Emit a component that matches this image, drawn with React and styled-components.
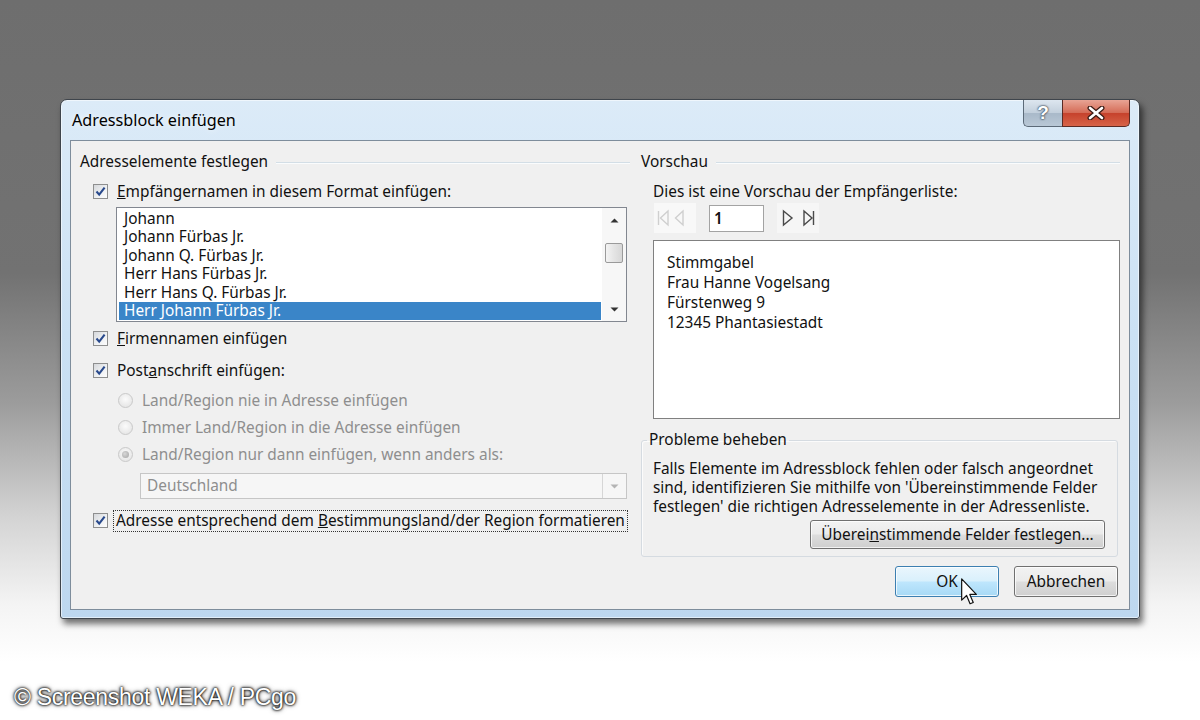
import React from "react";
import styled, { createGlobalStyle } from "styled-components";

const FS = "15.4px";

const GlobalStyle = createGlobalStyle`
  html, body {
    margin: 0;
    padding: 0;
  }
  body {
    width: 1200px;
    height: 720px;
    overflow: hidden;
    font-family: "Noto Sans", "Open Sans", sans-serif;
    color: #111;
  }
`;

const names = [
  "Johann",
  "Johann Fürbas Jr.",
  "Johann Q. Fürbas Jr.",
  "Herr Hans Fürbas Jr.",
  "Herr Hans Q. Fürbas Jr.",
  "Herr Johann Fürbas Jr.",
];

const address = ["Stimmgabel", "Frau Hanne Vogelsang", "Fürstenweg 9", "12345 Phantasiestadt"];

function CheckBox() {
  return (
    <StyledCheck>
      <svg width="13" height="13" viewBox="0 0 13 13">
        <path d="M2.5 6.5 L5.2 9.6 L10.6 2.6" fill="none" stroke="#28498c" strokeWidth="2.1" />
      </svg>
    </StyledCheck>
  );
}

function App() {
  return (
    <>
      <GlobalStyle />
      <Page>
        <Window>
          <TitleBar>
            <Title>Adressblock einfügen</Title>
            <Controls>
              <HelpButton>?</HelpButton>
              <CloseButton>
                <svg width="20" height="14" viewBox="0 0 20 14">
                  <path d="M4 2 L16 12 M16 2 L4 12" stroke="#3a1a14" strokeWidth="5" strokeLinecap="round" />
                  <path d="M4 2 L16 12 M16 2 L4 12" stroke="#fff" strokeWidth="2.6" strokeLinecap="round" />
                </svg>
              </CloseButton>
            </Controls>
          </TitleBar>

          <Client>
            <Column $width={550}>
              <GroupHeader>Adresselemente festlegen</GroupHeader>

              <CheckRow $mt={10} $indent={13}>
                <CheckBox />
                <Label>
                  <u>E</u>mpfängernamen in diesem Format einfügen:
                </Label>
              </CheckRow>

              <ListBox>
                <ListItems>
                  {names.map((n, i) => (
                    <ListItem key={n} $selected={i === names.length - 1}>
                      {n}
                    </ListItem>
                  ))}
                </ListItems>
                <ScrollBar>
                  <ScrollArrow>
                    <svg width="9" height="5" viewBox="0 0 9 5">
                      <path d="M0.5 4.5 L4.5 0.5 L8.5 4.5 Z" fill="#333" />
                    </svg>
                  </ScrollArrow>
                  <Thumb />
                  <ScrollSpacer />
                  <ScrollArrow>
                    <svg width="9" height="5" viewBox="0 0 9 5">
                      <path d="M0.5 0.5 L4.5 4.5 L8.5 0.5 Z" fill="#333" />
                    </svg>
                  </ScrollArrow>
                </ScrollBar>
              </ListBox>

              <CheckRow $mt={7} $indent={13}>
                <CheckBox />
                <Label>
                  <u>F</u>irmennamen einfügen
                </Label>
              </CheckRow>

              <CheckRow $mt={12} $indent={13}>
                <CheckBox />
                <Label>
                  Post<u>a</u>nschrift einfügen:
                </Label>
              </CheckRow>

              <CheckRow $mt={10} $indent={38}>
                <Radio />
                <Label $disabled>Land/Region nie in Adresse einfügen</Label>
              </CheckRow>
              <CheckRow $mt={7} $indent={38}>
                <Radio />
                <Label $disabled>Immer Land/Region in die Adresse einfügen</Label>
              </CheckRow>
              <CheckRow $mt={7} $indent={38}>
                <Radio $checked />
                <Label $disabled>Land/Region nur dann einfügen, wenn anders als:</Label>
              </CheckRow>

              <Combo>
                <ComboText>Deutschland</ComboText>
                <ComboButton>
                  <svg width="9" height="5" viewBox="0 0 9 5">
                    <path d="M0.5 0.5 L4.5 4.5 L8.5 0.5 Z" fill="#b4b4b4" />
                  </svg>
                </ComboButton>
              </Combo>

              <CheckRow $mt={12} $indent={13}>
                <CheckBox />
                <FocusLabel>
                  Adresse entsprechend dem <u>B</u>estimmungsland/der Region formatieren
                </FocusLabel>
              </CheckRow>
            </Column>

            <Column $width={479}>
              <GroupHeader>Vorschau</GroupHeader>
              <Caption>Dies ist eine Vorschau der Empfängerliste:</Caption>

              <NavRow>
                <NavGroup $disabled>
                  <svg width="42" height="30" viewBox="0 0 42 30">
                    <g fill="none" stroke="#cfcfcf" strokeWidth="1.4">
                      <path d="M4.5 8 V22" />
                      <path d="M14 8 L6.5 15 L14 22 Z" />
                      <path d="M29 8 L21.5 15 L29 22 Z" />
                    </g>
                  </svg>
                </NavGroup>
                <PageInput>1</PageInput>
                <NavGroup>
                  <svg width="42" height="30" viewBox="0 0 42 30">
                    <g fill="none" stroke="#4a4a4a" strokeWidth="1.4">
                      <path d="M6.5 8 L15 15 L6.5 22 Z" />
                      <path d="M27 8 L35 15 L27 22 Z" />
                      <path d="M36.5 8 V22" />
                    </g>
                  </svg>
                </NavGroup>
              </NavRow>

              <PreviewBox>
                {address.map((line) => (
                  <div key={line}>{line}</div>
                ))}
              </PreviewBox>

              <GroupBox>
                <Legend>Probleme beheben</Legend>
                <HelpText>
                  Falls Elemente im Adressblock fehlen oder falsch angeordnet
                  <br />
                  sind, identifizieren Sie mithilfe von 'Übereinstimmende Felder
                  <br />
                  festlegen' die richtigen Adresselemente in der Adressenliste.
                </HelpText>
                <GroupButtonRow>
                  <Button $width={295} $height={29}>
                    Überei<u>n</u>stimmende Felder festlegen...
                  </Button>
                </GroupButtonRow>
              </GroupBox>

              <ButtonRow>
                <Button $primary $width={104} $height={31}>
                  OK
                  <Cursor width="16" height="27" viewBox="0 0 12 20">
                    <path
                      d="M0.5 0.5 L0.5 16.5 L4.2 13 L6.8 19.2 L9.2 18.2 L6.6 12.2 L11.5 12.2 Z"
                      fill="#fff"
                      stroke="#111"
                      strokeWidth="0.9"
                      strokeLinejoin="round"
                    />
                  </Cursor>
                </Button>
                <Button $width={104} $height={31}>
                  Abbrechen
                </Button>
              </ButtonRow>
            </Column>
          </Client>
        </Window>
        <Watermark>© Screenshot WEKA / PCgo</Watermark>
      </Page>
    </>
  );
}

export default App;

const Page = styled.div`
  width: 1200px;
  height: 720px;
  box-sizing: border-box;
  padding: 99px 0 0 14px;
  display: flex;
  flex-direction: column;
  background: linear-gradient(
    180deg,
    #6e6e6e 0%,
    #727272 38%,
    #9c9c9c 56%,
    #d4d4d4 72%,
    #f4f4f4 84%,
    #ffffff 92%
  );
`;

const Window = styled.div`
  width: 1080px;
  height: 520px;
  margin-left: 46px;
  box-sizing: border-box;
  border: 1px solid #3f454c;
  border-radius: 7px 7px 3px 3px;
  padding: 0 9px 8px 9px;
  display: flex;
  flex-direction: column;
  background: linear-gradient(180deg, #dcebf8 0%, #cbe1f4 45%, #bdd7ef 100%);
  box-shadow: inset 0 0 0 1px rgba(255, 255, 255, 0.55), 3px 5px 6px rgba(0, 0, 0, 0.55);
`;

const TitleBar = styled.div`
  height: 40px;
  display: flex;
  justify-content: space-between;
  align-items: flex-start;
`;

const Title = styled.div`
  padding: 9px 0 0 2px;
  font-size: 16.2px;
  color: #000;
  text-shadow: 0 0 6px rgba(255, 255, 255, 0.9);
`;

const Controls = styled.div`
  display: flex;
  height: 27px;
`;

const HelpButton = styled.div`
  width: 39px;
  height: 27px;
  box-sizing: border-box;
  border: 1px solid #5c6a78;
  border-top: none;
  border-right: none;
  border-radius: 0 0 0 5px;
  background: linear-gradient(180deg, #dde6ef 0%, #c2cfdc 50%, #a9b9c9 52%, #b9c8d6 100%);
  color: #fff;
  font-family: "Liberation Sans", sans-serif;
  font-weight: bold;
  font-size: 19px;
  text-align: center;
  line-height: 26px;
  text-shadow: 0 0 2px #283848, 0 0 2px #283848;
`;

const CloseButton = styled.div`
  width: 68px;
  height: 27px;
  box-sizing: border-box;
  border: 1px solid #5a2a24;
  border-top: none;
  border-radius: 0 0 5px 0;
  display: flex;
  align-items: center;
  justify-content: center;
  background: linear-gradient(180deg, #e8a495 0%, #d56d58 48%, #c6422c 52%, #d76449 100%);
`;

const Client = styled.div`
  height: 470px;
  box-sizing: border-box;
  border: 1px solid #7e8d9c;
  background: #f0f0f0;
  padding: 11px 9px 0 9px;
  display: flex;
  gap: 11px;
`;

const Column = styled.div`
  width: ${({ $width }) => $width}px;
  display: flex;
  flex-direction: column;
`;

const GroupHeader = styled.div`
  height: 20px;
  display: flex;
  align-items: center;
  gap: 8px;
  font-size: ${FS};
  line-height: 20px;
  white-space: nowrap;

  &::after {
    content: "";
    flex: 1;
    height: 1px;
    background: #d3dee6;
    box-shadow: 0 1px 0 #fafcfd;
  }
`;

const CheckRow = styled.div`
  height: 20px;
  margin-top: ${({ $mt }) => $mt}px;
  padding-left: ${({ $indent }) => $indent}px;
  display: flex;
  align-items: center;
  gap: 9px;
`;

const StyledCheck = styled.span`
  width: 15px;
  height: 15px;
  margin-top: -1px;
  box-sizing: border-box;
  border: 1px solid #8e8f8f;
  background: linear-gradient(135deg, #d6d8db 0%, #eef0f2 55%, #fdfdfd 100%);
  display: flex;
  align-items: center;
  justify-content: center;
  flex-shrink: 0;
`;

const Label = styled.span`
  font-size: ${FS};
  line-height: 20px;
  white-space: nowrap;
  color: ${({ $disabled }) => ($disabled ? "#8e8e8e" : "#111")};
`;

const FocusLabel = styled(Label)`
  margin-left: -3px;
  padding: 0 2px;
  outline: 1px dotted #333;
  outline-offset: 0;
`;

const Radio = styled.span`
  width: 15px;
  height: 15px;
  margin-top: -1px;
  box-sizing: border-box;
  border-radius: 50%;
  border: 1px solid #c9c9c9;
  background: radial-gradient(circle at 50% 40%, #fbfbfb 0%, #e8e8e8 70%);
  flex-shrink: 0;
  display: flex;
  align-items: center;
  justify-content: center;

  &::after {
    content: "";
    display: ${({ $checked }) => ($checked ? "block" : "none")};
    width: 7px;
    height: 7px;
    border-radius: 50%;
    background: radial-gradient(circle at 40% 40%, #d8d8d8, #a2a2a2);
  }
`;

const ListBox = styled.div`
  margin: 5px 0 0 36px;
  width: 511px;
  height: 115px;
  box-sizing: border-box;
  border: 1px solid #828790;
  background: #fff;
  display: flex;
`;

const ListItems = styled.div`
  flex: 1;
  padding-top: 2px;
`;

const ListItem = styled.div`
  height: 18.4px;
  margin: 0 1px 0 2px;
  padding-left: 5px;
  font-size: ${FS};
  line-height: 18.4px;
  white-space: nowrap;
  background: ${({ $selected }) => ($selected ? "#3a85c8" : "transparent")};
  color: ${({ $selected }) => ($selected ? "#fff" : "#111")};
`;

const ScrollBar = styled.div`
  width: 24px;
  display: flex;
  flex-direction: column;
  align-items: center;
  background: #f7f7f7;
`;

const ScrollArrow = styled.div`
  height: 24px;
  display: flex;
  align-items: center;
  justify-content: center;
`;

const Thumb = styled.div`
  margin-top: 11px;
  width: 18px;
  height: 20px;
  box-sizing: border-box;
  border: 1px solid #9a9a9a;
  border-radius: 2px;
  background: linear-gradient(90deg, #f3f3f3 0%, #e4e4e4 50%, #d7d7d7 100%);
`;

const ScrollSpacer = styled.div`
  flex: 1;
`;

const Combo = styled.div`
  margin: 8px 0 0 60px;
  width: 487px;
  height: 26px;
  box-sizing: border-box;
  border: 1px solid #c6c6c6;
  background: #f6f6f6;
  display: flex;
  align-items: stretch;
`;

const ComboText = styled.div`
  flex: 1;
  padding-left: 6px;
  font-size: ${FS};
  line-height: 24px;
  color: #8e8e8e;
`;

const ComboButton = styled.div`
  width: 23px;
  border-left: 1px solid #d6d6d6;
  display: flex;
  align-items: center;
  justify-content: center;
`;

const Caption = styled.div`
  margin-top: 10px;
  padding-left: 12px;
  height: 20px;
  font-size: ${FS};
  line-height: 20px;
  white-space: nowrap;
`;

const NavRow = styled.div`
  margin-top: 1px;
  padding-left: 13px;
  height: 30px;
  display: flex;
  align-items: center;
  gap: 13px;
`;

const NavGroup = styled.div`
  width: 42px;
  height: 30px;
  background: ${({ $disabled }) => ($disabled ? "#f8f8f8" : "#f6f6f6")};
  display: flex;
`;

const PageInput = styled.div`
  width: 55px;
  height: 27px;
  box-sizing: border-box;
  border: 1px solid #a3a3a3;
  background: #fff;
  padding-left: 4px;
  font-size: ${FS};
  font-weight: 600;
  line-height: 25px;
`;

const PreviewBox = styled.div`
  margin: 7px 0 0 12px;
  width: 467px;
  height: 179px;
  box-sizing: border-box;
  border: 1px solid #808080;
  background: #fff;
  padding: 12px 0 0 13px;
  font-size: ${FS};
  line-height: 20px;
`;

const GroupBox = styled.fieldset`
  margin: 11px 2px 0 0;
  padding: 0 12px 7px 11px;
  border: 1px solid #d5dbe1;
  border-radius: 3px;
  box-shadow: inset 1px 1px 0 #fbfbfb;
  min-width: 0;
`;

const Legend = styled.legend`
  margin-left: -6px;
  padding: 0 2px;
  font-size: ${FS};
  line-height: 20px;
`;

const HelpText = styled.div`
  padding-top: 9px;
  font-size: ${FS};
  line-height: 19px;
  white-space: nowrap;
`;

const GroupButtonRow = styled.div`
  margin-top: 4px;
  display: flex;
  justify-content: flex-end;
`;

const ButtonRow = styled.div`
  margin: 9px 2px 0 0;
  display: flex;
  justify-content: flex-end;
  gap: 15px;
`;

const Button = styled.div`
  position: relative;
  width: ${({ $width }) => $width}px;
  height: ${({ $height }) => $height}px;
  box-sizing: border-box;
  border-radius: 3px;
  border: 1px solid ${({ $primary }) => ($primary ? "#3c7fb1" : "#707070")};
  background: ${({ $primary }) =>
    $primary
      ? "linear-gradient(180deg, #eaf6fd 0%, #d9f0fc 48%, #bee6fd 52%, #a7d9f5 100%)"
      : "linear-gradient(180deg, #f2f2f2 0%, #ebebeb 48%, #dddddd 52%, #cfcfcf 100%)"};
  box-shadow: inset 0 0 0 1px rgba(255, 255, 255, 0.75);
  display: flex;
  align-items: center;
  justify-content: center;
  font-size: ${FS};
  white-space: nowrap;
`;

const Cursor = styled.svg`
  position: absolute;
  left: 65px;
  top: 11px;
`;

const Watermark = styled.div`
  margin-top: 64px;
  height: 28px;
  font-family: "Liberation Sans", Arial, sans-serif;
  font-size: 23px;
  line-height: 28px;
  letter-spacing: -0.3px;
  color: #fff;
  text-shadow: 0 0 2px #000, 0 0 3px #000, 0 0 5px rgba(0, 0, 0, 0.7);
`;
